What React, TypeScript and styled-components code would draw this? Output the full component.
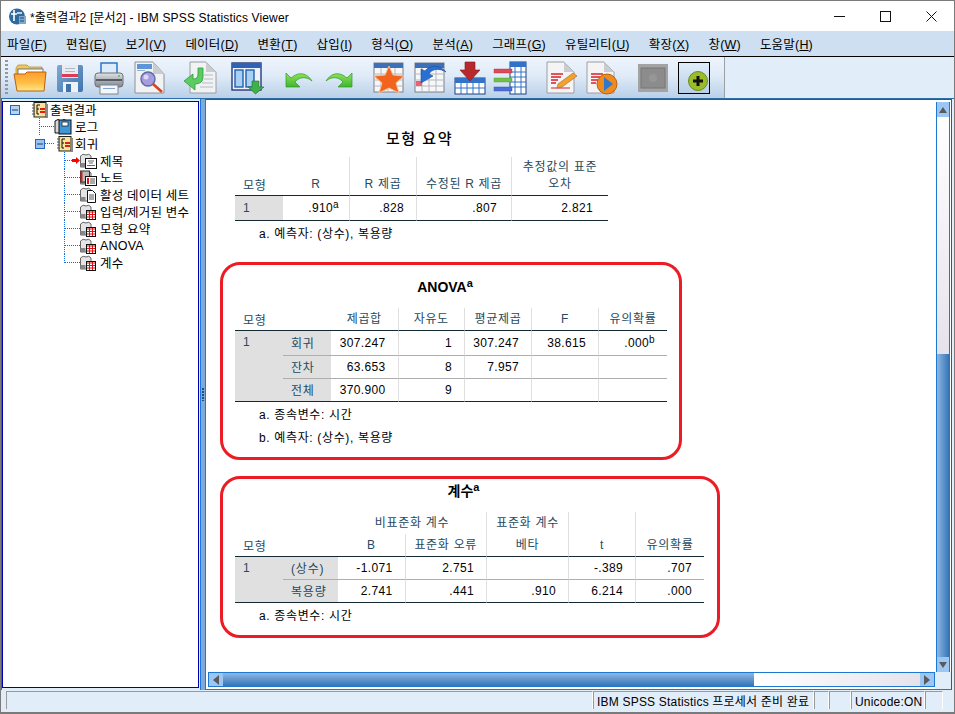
import React from "react";
import styled, { createGlobalStyle } from "styled-components";

const GlobalStyle = createGlobalStyle`
  html, body {
    margin: 0;
    padding: 0;
    overflow: hidden;
    background: #fff;
  }
  * {
    box-sizing: border-box;
  }
`;

const FONT = `"Liberation Sans", "Noto Sans CJK KR", sans-serif`;

/* ---------- toolbar drawings ---------- */

function FolderIcon() {
  return (
    <svg width="34" height="34" viewBox="0 0 34 34">
      <defs>
        <linearGradient id="fo" x1="0" y1="0" x2="0" y2="1">
          <stop offset="0" stopColor="#ff9c2a" />
          <stop offset="0.6" stopColor="#ffc04a" />
          <stop offset="1" stopColor="#ffe88a" />
        </linearGradient>
      </defs>
      <path d="M3 7 L5 4 H14 L16 6 H29 V14 H3 Z" fill="#f5c84c" stroke="#b58a20" strokeWidth=".7" />
      <rect x="5" y="8" width="25" height="6" fill="#fff" stroke="#3a5fa0" strokeWidth=".8" />
      <path d="M1 13 H12 L14 11 H33 L31 30 H4 Z" fill="url(#fo)" stroke="#b8620e" />
    </svg>
  );
}

function SaveIcon() {
  return (
    <svg width="34" height="34" viewBox="0 0 34 34">
      <defs>
        <linearGradient id="sv" x1="0" y1="0" x2="1" y2="1">
          <stop offset="0" stopColor="#7ea9d4" />
          <stop offset="1" stopColor="#3f74ab" />
        </linearGradient>
      </defs>
      <rect x="4" y="4" width="26" height="27" rx="2" fill="url(#sv)" />
      <rect x="9" y="4" width="16" height="13" fill="#e9ebf0" />
      <rect x="9" y="13" width="16" height="3" fill="#df3c54" />
      <rect x="12" y="7" width="10" height="1" fill="#aeb8c6" />
      <rect x="12" y="10" width="10" height="1" fill="#aeb8c6" />
      <rect x="10" y="21" width="15" height="10" fill="#eef1f5" />
      <rect x="13" y="23" width="5" height="8" fill="#3f74ab" />
    </svg>
  );
}

function PrintIcon() {
  return (
    <svg width="34" height="34" viewBox="0 0 34 34">
      <defs>
        <linearGradient id="pr" x1="0" y1="0" x2="0" y2="1">
          <stop offset="0" stopColor="#dfe2e6" />
          <stop offset="1" stopColor="#7f868e" />
        </linearGradient>
      </defs>
      <rect x="9" y="2" width="16" height="13" fill="#dcecfb" stroke="#1f6fc0" strokeWidth="1.4" />
      <rect x="3" y="12" width="28" height="14" rx="3" fill="url(#pr)" stroke="#6c7278" />
      <rect x="4" y="18" width="26" height="2" fill="#565c62" />
      <circle cx="27" cy="15" r="1" fill="#5ec24a" />
      <rect x="8" y="24" width="18" height="9" fill="#f4f6f9" stroke="#7f868e" />
      <rect x="11" y="27" width="12" height="1" fill="#7fa6d0" />
    </svg>
  );
}

function PreviewIcon() {
  return (
    <svg width="34" height="34" viewBox="0 0 34 34">
      <path d="M2 1 H20 L31 13 V32 H2 Z" fill="#f1f2f4" stroke="#8e9296" />
      <path d="M20 1 V13 H31 Z" fill="#c9cdd2" />
      <rect x="4" y="3" width="15" height="5" fill="#5d96d6" />
      <rect x="4" y="9" width="8" height="1" fill="#9db1c6" />
      <circle cx="15" cy="18" r="7" fill="#a79ce0" stroke="#5b6a9e" strokeWidth="1.4" />
      <circle cx="13" cy="16" r="2.5" fill="#dcd8f5" />
      <path d="M20 23 L29 31" stroke="#d8431f" strokeWidth="2.6" />
    </svg>
  );
}

function GotoIcon() {
  return (
    <svg width="34" height="34" viewBox="0 0 34 34">
      <path d="M7 1 H23 L33 11 V32 H7 Z" fill="#f1f2f4" stroke="#9a9ea2" />
      <path d="M23 1 V11 H33 Z" fill="#c9cdd2" />
      <path d="M21 14 H30 M21 18 H30 M19 22 H30 M17 26 H30" stroke="#b5bac0" />
      <path d="M15 7 H20 V16 Q20 23 12 23 V29 L1 20 L10 13 V18 Q15 18 15 13 Z" fill="#5ccc62" stroke="#2f9a3a" strokeWidth=".8" />
    </svg>
  );
}

function DesignateIcon() {
  return (
    <svg width="34" height="34" viewBox="0 0 34 34">
      <rect x="1" y="2" width="29" height="27" fill="#eef3fb" stroke="#273a78" strokeWidth="1.4" />
      <rect x="1" y="2" width="29" height="5" fill="#2f62b4" />
      <rect x="4" y="9" width="8" height="17" fill="#a9cff2" stroke="#1e5fb0" strokeWidth="1.4" />
      <rect x="15" y="9" width="8" height="17" fill="#a9cff2" stroke="#1e5fb0" strokeWidth="1.4" />
      <path d="M21 20 H28 V26 H33 L24.5 33 L17 26 H21 Z" fill="#3fb04a" stroke="#22702c" strokeWidth=".6" />
    </svg>
  );
}

function CurveArrow({ flip }: { flip?: boolean }) {
  const id = flip ? "ar2" : "ar1";
  return (
    <svg width="34" height="34" viewBox="0 0 34 34">
      <defs>
        <linearGradient id={id} x1="0" y1="0" x2="0" y2="1">
          <stop offset="0" stopColor="#8fe35a" />
          <stop offset="1" stopColor="#3fb52e" />
        </linearGradient>
      </defs>
      <g transform={flip ? "matrix(-1 0 0 1 34 0)" : undefined}>
        <path d="M4 12 V26 H18 L13 21 C17 16 24 15 30 20 C25 12 17 10 9 17 Z" fill={`url(#${id})`} stroke="#2f9a2a" strokeWidth=".7" />
      </g>
    </svg>
  );
}

function SheetGrid() {
  return (
    <>
      <rect x="2" y="2" width="29" height="29" fill="#f6f7f9" stroke="#7d8088" />
      <rect x="2" y="2" width="29" height="5" fill="#3f6fb6" />
      <path d="M9 7 V31 M16 7 V31 M23 7 V31 M2 13 H31 M2 19 H31 M2 25 H31" stroke="#b4b7bd" />
    </>
  );
}

function StarTableIcon() {
  return (
    <svg width="34" height="34" viewBox="0 0 34 34">
      <SheetGrid />
      <path d="M17 5 L21 14 L32 15 L24 22 L27 32 L17 27 L7 32 L10 22 L2 15 L13 14 Z" fill="#f2641e" stroke="#f3c19b" strokeWidth="1" />
    </svg>
  );
}

function TableBackIcon() {
  return (
    <svg width="34" height="34" viewBox="0 0 34 34">
      <SheetGrid />
      <rect x="3" y="20" width="6" height="5" fill="#ee5f74" />
      <path d="M33 11 C25 6 18 9 16 13 L20 15 L8 22 L8 8 L12 10 C16 4 27 3 33 11 Z" fill="#2a6fd2" stroke="#1a4f9e" strokeWidth=".6" />
    </svg>
  );
}

function InsertIcon() {
  return (
    <svg width="34" height="34" viewBox="0 0 34 34">
      <rect x="2" y="17" width="30" height="16" fill="#fff" stroke="#1f3f80" />
      <rect x="2" y="17" width="30" height="5" fill="#3272c8" />
      <path d="M2 27 H32 M8 22 V33 M14 22 V33 M20 22 V33 M26 22 V33" stroke="#2f72c8" />
      <path d="M12 1 H22 V9 H27 L17 20 L7 9 H12 Z" fill="#b8282c" stroke="#7a1c1e" strokeWidth=".6" />
    </svg>
  );
}

function BarsIcon() {
  return (
    <svg width="34" height="34" viewBox="0 0 34 34">
      <rect x="17" y="1" width="16" height="32" fill="#fff" stroke="#1f3f80" />
      <rect x="17" y="1" width="16" height="5" fill="#2f72c8" />
      <path d="M17 11 H33 M17 16 H33 M17 21 H33 M17 26 H33 M22 6 V33 M28 6 V33" stroke="#2f72c8" />
      <rect x="1" y="8" width="18" height="4" fill="#dd4a58" stroke="#b03040" strokeWidth=".4" />
      <rect x="1" y="17" width="18" height="4" fill="#72c04a" stroke="#4c9a30" strokeWidth=".4" />
      <rect x="1" y="26" width="18" height="4" fill="#4a6fd8" stroke="#2c4ca8" strokeWidth=".4" />
    </svg>
  );
}

function DocLines() {
  return (
    <>
      <path d="M3 1 H20 L30 11 V32 H3 Z" fill="#f4f4f5" stroke="#9a9ea2" />
      <path d="M20 1 V11 H30 Z" fill="#c9cdd2" />
      <path d="M7 13 H19 M7 16 H17 M7 19 H14 M7 22 H12" stroke="#d6202c" strokeWidth="1.4" />
    </>
  );
}

function NoteIcon() {
  return (
    <svg width="34" height="34" viewBox="0 0 34 34">
      <DocLines />
      <path d="M7 27 H26" stroke="#d6202c" />
      <path d="M14 23 L29 12 L33 15 L18 26 L13 27 Z" fill="#f2a030" stroke="#a86412" strokeWidth=".6" />
    </svg>
  );
}

function PlayDocIcon() {
  return (
    <svg width="34" height="34" viewBox="0 0 34 34">
      <DocLines />
      <circle cx="23" cy="23" r="10" fill="#ee8a1e" stroke="#b8620e" />
      <path d="M20 16 L29 23 L20 30 Z" fill="#2f79c8" />
    </svg>
  );
}

function DisabledIcon() {
  return (
    <svg width="30" height="28" viewBox="0 0 30 28">
      <rect width="30" height="28" fill="#a3a3a3" />
      <rect x="3" y="4" width="24" height="20" fill="#8c8c8c" stroke="#777" />
      <circle cx="15" cy="14" r="4" fill="#969696" />
    </svg>
  );
}

function PlusIcon() {
  return (
    <svg width="32" height="32" viewBox="0 0 32 32">
      <defs>
        <linearGradient id="pl" x1="0" y1="0" x2="0" y2="1">
          <stop offset="0" stopColor="#e2edfa" />
          <stop offset="1" stopColor="#b5cee8" />
        </linearGradient>
      </defs>
      <rect x=".5" y=".5" width="31" height="31" fill="url(#pl)" stroke="#000" />
      <circle cx="20" cy="19" r="9.5" fill="#9bbc2a" stroke="#6d8a1a" />
      <path d="M20 14 V24 M15 19 H25" stroke="#111" strokeWidth="3" />
    </svg>
  );
}

const TOOLS: { key: string; gap: number; icon: React.ReactNode }[] = [
  { key: "open", gap: 0, icon: <FolderIcon /> },
  { key: "save", gap: 0, icon: <SaveIcon /> },
  { key: "print", gap: -1, icon: <PrintIcon /> },
  { key: "preview", gap: 1, icon: <PreviewIcon /> },
  { key: "goto", gap: 10, icon: <GotoIcon /> },
  { key: "designate", gap: 8, icon: <DesignateIcon /> },
  { key: "undo", gap: 11, icon: <CurveArrow /> },
  { key: "redo", gap: 0, icon: <CurveArrow flip /> },
  { key: "star", gap: 10, icon: <StarTableIcon /> },
  { key: "back", gap: 1, icon: <TableBackIcon /> },
  { key: "insert", gap: 0, icon: <InsertIcon /> },
  { key: "bars", gap: 0, icon: <BarsIcon /> },
  { key: "note", gap: 11, icon: <NoteIcon /> },
  { key: "play", gap: 0, icon: <PlayDocIcon /> },
  { key: "disabled", gap: 12, icon: <DisabledIcon /> },
  { key: "plus", gap: 1, icon: <PlusIcon /> },
];

const MENUS = [
  ["파일", "F"],
  ["편집", "E"],
  ["보기", "V"],
  ["데이터", "D"],
  ["변환", "T"],
  ["삽입", "I"],
  ["형식", "O"],
  ["분석", "A"],
  ["그래프", "G"],
  ["유틸리티", "U"],
  ["확장", "X"],
  ["창", "W"],
  ["도움말", "H"],
];

/* ---------- tree drawings ---------- */

function OutputBook() {
  return (
    <svg width="16" height="16" viewBox="0 0 16 16">
      <rect x="2" y="0.5" width="12" height="14.5" fill="#f8e49a" stroke="#222" />
      <rect x="14" y="2" width="2" height="14" fill="#888" />
      <path d="M0 3 H3 M0 6 H3 M0 9 H3 M0 12 H3" stroke="#555" />
      <path d="M5 3 V12 M5 3 H8 M5 7 H7 M5 12 H7" stroke="#111" />
      <rect x="8" y="6" width="5" height="2" fill="#e41a1a" />
      <rect x="8" y="9" width="5" height="2" fill="#e41a1a" />
    </svg>
  );
}

function LogBook() {
  return (
    <svg width="18" height="17" viewBox="0 0 18 17">
      <path d="M1 3 Q4 0 7 3 V15 H1 Z" fill="#d8d8d8" stroke="#111" />
      <path d="M7 3 Q10 0 13 3" fill="none" stroke="#111" />
      <rect x="5" y="2" width="12" height="14" fill="#3f97d8" stroke="#111" />
      <rect x="8" y="4" width="6" height="4" fill="#fff" stroke="#111" strokeWidth=".7" />
    </svg>
  );
}

function PageBook({ kind }: { kind: "title" | "note" | "doc" | "table" }) {
  return (
    <svg width="17" height="16" viewBox="0 0 17 16">
      <path d="M0.5 3 Q3 0 6 2 Q9 0 11 3 V14 H0.5 Z" fill="#e4e4e4" stroke="#666" />
      <rect x="0.5" y="10" width="5" height="4" fill="#888" />
      {kind === "title" && (
        <>
          <rect x="5.5" y="5.5" width="11" height="10" fill="#fff" stroke="#111" />
          <path d="M8 8 H14 M9 10 H13 M7 12.5 H15" stroke="#666" />
        </>
      )}
      {kind === "note" && (
        <>
          <rect x="0.5" y="1" width="9" height="11" fill="#bbb" stroke="#333" />
          <rect x="0.5" y="1" width="2" height="11" fill="#c22" />
          <rect x="5.5" y="6.5" width="11" height="9" fill="#fff" stroke="#111" />
          <rect x="7" y="8" width="2" height="6" fill="#d11" />
          <path d="M10 9 H15 M10 11 H15 M10 13 H15" stroke="#555" />
        </>
      )}
      {kind === "doc" && (
        <>
          <path d="M7.5 3.5 H12.5 L15.5 6.5 V15.5 H7.5 Z" fill="#fff" stroke="#111" />
          <path d="M9 8 H14 M9 10 H14 M9 12 H14" stroke="#555" />
        </>
      )}
      {kind === "table" && (
        <>
          <rect x="6.5" y="6.5" width="9" height="9" fill="#fff" stroke="#111" />
          <path d="M7 8 H15 M9.5 7 V15 M12.5 7 V15 M7 10.5 H15 M7 13 H15" stroke="#d11" />
        </>
      )}
    </svg>
  );
}

function Collapse({ lit }: { lit?: boolean }) {
  return (
    <svg width="10" height="10" viewBox="0 0 10 10">
      <rect x=".5" y=".5" width="9" height="9" fill={lit ? "#9cc4f2" : "#b9d3f2"} stroke="#2467b8" />
      <path d="M2 5 H8" stroke="#1b3f78" />
    </svg>
  );
}

/* ---------- layout ---------- */

const Window = styled.div`
  width: 955px;
  height: 714px;
  display: flex;
  flex-direction: column;
  font-family: ${FONT};
  color: #000;
  border-top: 1px solid #7a7a7a;
  border-left: 1px solid #7a7a7a;
  border-right: 1px solid #7a7a7a;
  background: #e2edfa;
  overflow: hidden;
`;

const TitleBar = styled.div`
  height: 30px;
  flex: none;
  background: #fff;
  display: flex;
  align-items: center;
  padding-left: 8px;
  font-size: 12px;
  letter-spacing: 0.15px;
`;

const TitleText = styled.span`
  margin-left: 4px;
  flex: 1;
`;

const WinButton = styled.div`
  width: 46px;
  height: 30px;
  display: flex;
  align-items: center;
  justify-content: center;
`;

const MenuBar = styled.div`
  height: 26px;
  flex: none;
  display: flex;
  align-items: center;
  gap: 19px;
  padding: 0 0 0 6px;
  background: #cddff0;
  border-bottom: 1px solid #000;
  font-size: 12.5px;
  letter-spacing: 0.2px;
`;

const MenuItem = styled.div`
  white-space: nowrap;
`;

const Mnemonic = styled.span`
  text-decoration: underline;
`;

const ToolRow = styled.div`
  height: 42px;
  flex: none;
  display: flex;
  background: #e2edfa;
  border-bottom: 1px solid #2c6ea8;
`;

const ToolStrip = styled.div`
  width: 724px;
  display: flex;
  align-items: center;
  padding-left: 9px;
  position: relative;
  background: linear-gradient(#eef4fc, #e0ebf8 45%, #b9d0e8);
  border-right: 1px solid #9aa0a8;
`;

const Grip = styled.div`
  position: absolute;
  left: 4px;
  top: 3px;
  bottom: 3px;
  width: 3px;
  background: repeating-linear-gradient(#8f99a6 0 2px, transparent 2px 4px);
`;

const ToolButton = styled.div<{ $gap: number }>`
  width: 40px;
  height: 36px;
  flex: none;
  margin-left: ${(p) => p.$gap}px;
  display: flex;
  align-items: center;
  justify-content: center;
`;

const Body = styled.div`
  flex: 1;
  min-height: 0;
  display: flex;
  background: #e2edfa;
`;

const LeftSide = styled.div`
  width: 200px;
  flex: none;
  padding: 2px 1px 2px 0;
  background: #e2edfa;
  border-left: 1px solid #2b6cb0;
  border-right: 1px solid #1e78d0;
`;

const TreePanel = styled.div`
  height: 100%;
  background: #fff;
  border: 1px solid #0000b0;
  font-size: 12.5px;
  letter-spacing: 0.2px;
`;

const TreeRow = styled.div<{ $indent: number }>`
  height: 17px;
  display: flex;
  align-items: center;
  padding-left: ${(p) => p.$indent}px;
  white-space: nowrap;
  &:first-child {
    margin-top: -1px;
  }
`;

const Elbow = styled.div<{ $w: number; $last?: boolean }>`
  width: ${(p) => p.$w}px;
  height: 17px;
  flex: none;
  position: relative;
  &::before {
    content: "";
    position: absolute;
    left: 0;
    top: 0;
    bottom: ${(p) => (p.$last ? 8 : 0)}px;
    border-left: 1px dotted #1469e0;
  }
  &::after {
    content: "";
    position: absolute;
    left: 0;
    right: 0;
    top: 8px;
    border-top: 1px dotted #1469e0;
  }
`;

const SlotIcon = styled.div<{ $w: number }>`
  width: ${(p) => p.$w}px;
  flex: none;
  display: flex;
  align-items: center;
`;

const ToggleSlot = styled.div<{ $w: number }>`
  width: ${(p) => p.$w}px;
  flex: none;
  display: flex;
  align-items: center;
  position: relative;
`;

const ToggleLine = styled.div<{ $w: number }>`
  width: ${(p) => p.$w}px;
  border-top: 1px dotted #1469e0;
`;

const RedArrow = styled.svg`
  position: absolute;
  right: 0;
  top: 5px;
`;

const Splitter = styled.div`
  width: 4px;
  flex: none;
  background: #7ea9d8;
  display: flex;
  align-items: center;
  justify-content: center;
`;

const SplitGrip = styled.div`
  width: 2px;
  height: 13px;
  background: repeating-linear-gradient(#1b4f8a 0 2px, transparent 2px 3px);
`;

const Pane = styled.div`
  width: 747px;
  flex: none;
  display: flex;
  flex-direction: column;
  border-left: 1px solid #1e78d0;
  border-top: 1px solid #1a5f9e;
  border-bottom: 1px solid #1e78d0;
  border-right: 1px solid #1a5f9e;
  background: #e2edfa;
`;

const PaneMain = styled.div`
  flex: 1;
  min-height: 0;
  display: flex;
`;

const Viewer = styled.div`
  flex: 1;
  background: #fff;
  padding: 27px 0 0 14px;
  overflow: hidden;
  color: #010205;
`;

const VBar = styled.div`
  width: 16px;
  flex: none;
  padding: 2px 1px 0 1px;
  display: flex;
  flex-direction: column;
  background: #fff;
`;

const HRow = styled.div`
  height: 17px;
  flex: none;
  display: flex;
`;

const HBarWrap = styled.div`
  flex: 1;
  background: #fff;
  padding-left: 2px;
`;

const Corner = styled.div`
  width: 16px;
  flex: none;
  background: #e2edfa;
`;

const HBar = styled.div`
  height: 15px;
  display: flex;
  border: 1px solid #1e78d0;
`;

const ScrollBtn = styled.div<{ $v?: boolean }>`
  flex: none;
  width: ${(p) => (p.$v ? "100%" : "14px")};
  height: ${(p) => (p.$v ? "15px" : "100%")};
  background: #9cc7f5;
  display: flex;
  align-items: center;
  justify-content: center;
  ${(p) => (p.$v ? "border-left: 1px solid #1e78d0; border-right: 1px solid #1e78d0;" : "")}
`;

const Track = styled.div<{ $v?: boolean; $size: number }>`
  flex: none;
  ${(p) => (p.$v ? `height: ${p.$size}px;` : `width: ${p.$size}px;`)}
  background: linear-gradient(${(p) => (p.$v ? "180deg" : "90deg")}, #fff, #e6e2ec);
  ${(p) => (p.$v ? "border-left: 1px solid #1e78d0; border-right: 1px solid #1e78d0;" : "")}
`;

const Thumb = styled.div<{ $v?: boolean }>`
  flex: 1;
  background: linear-gradient(${(p) => (p.$v ? "90deg" : "180deg")}, #8db7e2, #3574b8);
  ${(p) => (p.$v ? "border-left: 1px solid #1e78d0; border-right: 1px solid #1e78d0;" : "")}
`;

const StatusBar = styled.div`
  height: 24px;
  flex: none;
  display: flex;
  padding: 1px 12px 3px 5px;
  background: #e2edfa;
  border-bottom: 2px solid #7a7a7a;
  font-size: 12px;
  letter-spacing: 0.2px;
`;

const StatusCell = styled.div<{ $w: number }>`
  width: ${(p) => p.$w}px;
  flex: none;
  padding-left: 3px;
  line-height: 20px;
  white-space: nowrap;
  border-top: 1px solid #9a9a9a;
  border-left: 1px solid #9a9a9a;
  border-right: 1px solid #fff;
`;

/* ---------- output tables ---------- */

const Block = styled.div`
  margin-left: 15px;
`;

const Marked = styled.div<{ $w: number; $h: number; $top: number; $pad: number }>`
  width: ${(p) => p.$w}px;
  height: ${(p) => p.$h}px;
  margin-top: ${(p) => p.$top}px;
  padding: ${(p) => p.$pad}px 0 0 12px;
  border: 3px solid #ed1c24;
  border-radius: 20px;
`;

const Caption = styled.div<{ $w: number; $h: number; $mb: number; $pr: number; $ko?: boolean }>`
  width: ${(p) => p.$w}px;
  height: ${(p) => p.$h}px;
  margin-bottom: ${(p) => p.$mb}px;
  padding-right: ${(p) => p.$pr}px;
  line-height: ${(p) => p.$h}px;
  text-align: center;
  font-size: ${(p) => (p.$ko ? "15px" : "14px")};
  font-weight: ${(p) => (p.$ko ? 500 : 700)};
  letter-spacing: ${(p) => (p.$ko ? "1.5px" : "0")};
  color: #000;
  sup {
    font-size: 11px;
    line-height: 0;
    vertical-align: 5px;
    font-weight: 700;
  }
`;

const Table = styled.table<{ $w: number }>`
  width: ${(p) => p.$w}px;
  table-layout: fixed;
  border-collapse: separate;
  border-spacing: 0;
  font-size: 12px;
  letter-spacing: 0.35px;
  sup {
    font-size: 10px;
    line-height: 0;
    vertical-align: 4px;
  }
`;

const Th = styled.th<{ $line?: boolean; $rule?: boolean; $left?: boolean; $h: number }>`
  height: ${(p) => p.$h}px;
  padding: 0 2px ${(p) => (p.$left ? 0 : 2)}px ${(p) => (p.$left ? 8 : 2)}px;
  font-weight: 400;
  color: #264a60;
  vertical-align: bottom;
  text-align: ${(p) => (p.$left ? "left" : "center")};
  line-height: 17px;
  letter-spacing: 0.7px;
  border-right: ${(p) => (p.$line ? "1px solid #dfdfdf" : "none")};
  border-bottom: ${(p) => (p.$rule ? "1px solid #152935" : "none")};
`;

const Td = styled.td<{
  $h: number;
  $line?: boolean;
  $rule?: "dark" | "soft";
  $shade?: boolean;
  $stub?: boolean;
  $span?: boolean;
  $pr?: number;
}>`
  height: ${(p) => p.$h}px;
  padding: ${(p) =>
    p.$span ? "4px 0 0 8px" : p.$stub ? "0 0 1px 8px" : `0 ${p.$pr ?? 12}px 1px 0`};
  text-align: ${(p) => (p.$stub ? "left" : "right")};
  color: ${(p) => (p.$stub ? "#264a60" : "#010205")};
  background: ${(p) => (p.$shade ? "#e0e0e0" : "transparent")};
  letter-spacing: ${(p) => (p.$stub ? "0.8px" : "0.35px")};
  vertical-align: ${(p) => (p.$span ? "top" : "middle")};
  border-right: ${(p) => (p.$line ? "1px solid #dfdfdf" : "none")};
  border-bottom: ${(p) =>
    p.$rule === "dark" ? "1px solid #152935" : p.$rule === "soft" ? "1px solid #aeaeae" : "none"};
`;

const Note = styled.div`
  height: 23px;
  line-height: 27px;
  padding-left: 24px;
  font-size: 12px;
  letter-spacing: 0.65px;
  color: #010205;
`;

function Cols({ widths }: { widths: number[] }) {
  return (
    <colgroup>
      {widths.map((w, i) => (
        <col key={i} style={{ width: w }} />
      ))}
    </colgroup>
  );
}

function SummaryTable() {
  return (
    <Table $w={373}>
      <Cols widths={[48, 67, 67, 95, 96]} />
      <thead>
        <tr>
          <Th $h={39} $left $rule>모형</Th>
          <Th $h={39} $line $rule>R</Th>
          <Th $h={39} $line $rule>R 제곱</Th>
          <Th $h={39} $line $rule>수정된 R 제곱</Th>
          <Th $h={39} $rule>추정값의 표준<br />오차</Th>
        </tr>
      </thead>
      <tbody>
        <tr>
          <Td $h={25} $stub $shade $rule="dark">1</Td>
          <Td $h={25} $line $rule="dark" $pr={10}>.910<sup>a</sup></Td>
          <Td $h={25} $line $rule="dark">.828</Td>
          <Td $h={25} $line $rule="dark" $pr={14}>.807</Td>
          <Td $h={25} $rule="dark" $pr={15}>2.821</Td>
        </tr>
      </tbody>
    </Table>
  );
}

function AnovaTable() {
  return (
    <Table $w={432}>
      <Cols widths={[48, 48, 67.5, 66.5, 67, 67, 68]} />
      <thead>
        <tr>
          <Th $h={23} $left $rule colSpan={2}>모형</Th>
          <Th $h={23} $line $rule>제곱합</Th>
          <Th $h={23} $line $rule>자유도</Th>
          <Th $h={23} $line $rule>평균제곱</Th>
          <Th $h={23} $line $rule>F</Th>
          <Th $h={23} $rule>유의확률</Th>
        </tr>
      </thead>
      <tbody>
        <tr>
          <Td $h={25} $stub $span $shade $rule="dark" rowSpan={3}>1</Td>
          <Td $h={25} $stub $shade $rule="soft">회귀</Td>
          <Td $h={25} $line $rule="soft">307.247</Td>
          <Td $h={25} $line $rule="soft">1</Td>
          <Td $h={25} $line $rule="soft">307.247</Td>
          <Td $h={25} $line $rule="soft">38.615</Td>
          <Td $h={25} $rule="soft">.000<sup>b</sup></Td>
        </tr>
        <tr>
          <Td $h={23} $stub $shade $rule="soft">잔차</Td>
          <Td $h={23} $line $rule="soft">63.653</Td>
          <Td $h={23} $line $rule="soft">8</Td>
          <Td $h={23} $line $rule="soft">7.957</Td>
          <Td $h={23} $line $rule="soft" />
          <Td $h={23} $rule="soft" />
        </tr>
        <tr>
          <Td $h={23} $stub $shade $rule="dark">전체</Td>
          <Td $h={23} $line $rule="dark">370.900</Td>
          <Td $h={23} $line $rule="dark">9</Td>
          <Td $h={23} $line $rule="dark" />
          <Td $h={23} $line $rule="dark" />
          <Td $h={23} $rule="dark" />
        </tr>
      </tbody>
    </Table>
  );
}

function CoefTable() {
  return (
    <Table $w={469}>
      <Cols widths={[48, 55, 67.5, 81.5, 82, 67, 68]} />
      <thead>
        <tr>
          <Th $h={22} colSpan={2} />
          <Th $h={22} $line colSpan={2}>비표준화 계수</Th>
          <Th $h={22} $line>표준화 계수</Th>
          <Th $h={22} $line />
          <Th $h={22} />
        </tr>
        <tr>
          <Th $h={23} $left $rule colSpan={2}>모형</Th>
          <Th $h={23} $line $rule>B</Th>
          <Th $h={23} $line $rule>표준화 오류</Th>
          <Th $h={23} $line $rule>베타</Th>
          <Th $h={23} $line $rule>t</Th>
          <Th $h={23} $rule>유의확률</Th>
        </tr>
      </thead>
      <tbody>
        <tr>
          <Td $h={23} $stub $span $shade $rule="dark" rowSpan={2}>1</Td>
          <Td $h={23} $stub $shade $rule="soft">(상수)</Td>
          <Td $h={23} $line $rule="soft">-1.071</Td>
          <Td $h={23} $line $rule="soft">2.751</Td>
          <Td $h={23} $line $rule="soft" />
          <Td $h={23} $line $rule="soft">-.389</Td>
          <Td $h={23} $rule="soft">.707</Td>
        </tr>
        <tr>
          <Td $h={23} $stub $shade $rule="dark">복용량</Td>
          <Td $h={23} $line $rule="dark">2.741</Td>
          <Td $h={23} $line $rule="dark">.441</Td>
          <Td $h={23} $line $rule="dark">.910</Td>
          <Td $h={23} $line $rule="dark">6.214</Td>
          <Td $h={23} $rule="dark">.000</Td>
        </tr>
      </tbody>
    </Table>
  );
}

function Tri({ dir }: { dir: "up" | "down" | "left" | "right" }) {
  const d = {
    up: "M1 8 L5 2 L9 8 Z",
    down: "M1 2 L9 2 L5 8 Z",
    left: "M8 0 V10 L2 5 Z",
    right: "M2 0 V10 L8 5 Z",
  }[dir];
  return (
    <svg width="10" height="10" viewBox="0 0 10 10">
      <path d={d} fill="#5a5a5a" />
    </svg>
  );
}

export default function App() {
  return (
    <>
      <GlobalStyle />
      <Window>
        <TitleBar>
          <svg width="17" height="17" viewBox="0 0 17 17">
            <circle cx="8" cy="8.5" r="8" fill="#2f6a9c" />
            <rect x="10" y="8" width="7" height="8" fill="#7fa8cc" />
            <path d="M5 2 V13 M2 6 H8" stroke="#fff" strokeWidth="1.6" />
            <path d="M8 5 H13" stroke="#fff" strokeWidth="1.4" />
            <path d="M11 10 H15 M11 13 H15" stroke="#1d4b75" />
          </svg>
          <TitleText>*출력결과2 [문서2] - IBM SPSS Statistics Viewer</TitleText>
          <WinButton>
            <svg width="11" height="11" viewBox="0 0 11 11">
              <path d="M0 5.5 H11" stroke="#111" />
            </svg>
          </WinButton>
          <WinButton>
            <svg width="11" height="11" viewBox="0 0 11 11">
              <rect x=".5" y=".5" width="10" height="10" fill="none" stroke="#111" />
            </svg>
          </WinButton>
          <WinButton>
            <svg width="11" height="11" viewBox="0 0 11 11">
              <path d="M.5 .5 L10.5 10.5 M10.5 .5 L.5 10.5" stroke="#111" />
            </svg>
          </WinButton>
        </TitleBar>

        <MenuBar>
          {MENUS.map(([name, key]) => (
            <MenuItem key={key}>
              {name}(<Mnemonic>{key}</Mnemonic>)
            </MenuItem>
          ))}
        </MenuBar>

        <ToolRow>
          <ToolStrip>
            <Grip />
            {TOOLS.map((t) => (
              <ToolButton key={t.key} $gap={t.gap}>
                {t.icon}
              </ToolButton>
            ))}
          </ToolStrip>
        </ToolRow>

        <Body>
          <LeftSide>
            <TreePanel>
              <TreeRow $indent={7}>
                <ToggleSlot $w={22}>
                  <Collapse />
                </ToggleSlot>
                <SlotIcon $w={18}>
                  <OutputBook />
                </SlotIcon>
                출력결과
              </TreeRow>
              <TreeRow $indent={36}>
                <Elbow $w={15} />
                <SlotIcon $w={21}>
                  <LogBook />
                </SlotIcon>
                로그
              </TreeRow>
              <TreeRow $indent={32}>
                <ToggleSlot $w={22}>
                  <Collapse lit />
                  <ToggleLine $w={9} />
                </ToggleSlot>
                <SlotIcon $w={18}>
                  <OutputBook />
                </SlotIcon>
                회귀
              </TreeRow>
              <TreeRow $indent={61}>
                <ToggleSlot $w={16}>
                  <Elbow $w={8} />
                  <RedArrow width="8" height="7" viewBox="0 0 8 7">
                    <path d="M0 2 H4 V0 L8 3.5 L4 7 V5 H0 Z" fill="#f00" />
                  </RedArrow>
                </ToggleSlot>
                <SlotIcon $w={20}>
                  <PageBook kind="title" />
                </SlotIcon>
                제목
              </TreeRow>
              <TreeRow $indent={61}>
                <Elbow $w={16} />
                <SlotIcon $w={20}>
                  <PageBook kind="note" />
                </SlotIcon>
                노트
              </TreeRow>
              <TreeRow $indent={61}>
                <Elbow $w={16} />
                <SlotIcon $w={20}>
                  <PageBook kind="doc" />
                </SlotIcon>
                활성 데이터 세트
              </TreeRow>
              <TreeRow $indent={61}>
                <Elbow $w={16} />
                <SlotIcon $w={20}>
                  <PageBook kind="table" />
                </SlotIcon>
                입력/제거된 변수
              </TreeRow>
              <TreeRow $indent={61}>
                <Elbow $w={16} />
                <SlotIcon $w={20}>
                  <PageBook kind="table" />
                </SlotIcon>
                모형 요약
              </TreeRow>
              <TreeRow $indent={61}>
                <Elbow $w={16} />
                <SlotIcon $w={20}>
                  <PageBook kind="table" />
                </SlotIcon>
                ANOVA
              </TreeRow>
              <TreeRow $indent={61}>
                <Elbow $w={16} $last />
                <SlotIcon $w={20}>
                  <PageBook kind="table" />
                </SlotIcon>
                계수
              </TreeRow>
            </TreePanel>
          </LeftSide>

          <Splitter>
            <SplitGrip />
          </Splitter>

          <Pane>
            <PaneMain>
              <Viewer>
                <Block>
                  <Caption $w={373} $h={24} $mb={6} $pr={4} $ko>
                    모형 요약
                  </Caption>
                  <SummaryTable />
                  <Note>a. 예측자: (상수), 복용량</Note>
                </Block>

                <Marked $w={462} $h={198} $top={18} $pad={10}>
                  <Caption $w={432} $h={24} $mb={9} $pr={12}>
                    ANOVA<sup>a</sup>
                  </Caption>
                  <AnovaTable />
                  <Note>a. 종속변수: 시간</Note>
                  <Note>b. 예측자: (상수), 복용량</Note>
                </Marked>

                <Marked $w={500} $h={162} $top={16} $pad={1}>
                  <Caption $w={469} $h={22} $mb={10} $pr={12}>
                    계수<sup>a</sup>
                  </Caption>
                  <CoefTable />
                  <Note>a. 종속변수: 시간</Note>
                </Marked>
              </Viewer>
              <VBar>
                <ScrollBtn $v>
                  <Tri dir="up" />
                </ScrollBtn>
                <Track $v $size={237} />
                <Thumb $v />
                <ScrollBtn $v>
                  <Tri dir="down" />
                </ScrollBtn>
              </VBar>
            </PaneMain>
            <HRow>
              <HBarWrap>
                <HBar>
                  <ScrollBtn>
                    <Tri dir="left" />
                  </ScrollBtn>
                  <Thumb />
                  <Track $size={166} />
                  <ScrollBtn>
                    <Tri dir="right" />
                  </ScrollBtn>
                </HBar>
              </HBarWrap>
              <Corner />
            </HRow>
          </Pane>
        </Body>

        <StatusBar>
          <StatusCell $w={587} />
          <StatusCell $w={221}>IBM SPSS Statistics 프로세서 준비 완료</StatusCell>
          <StatusCell $w={15} />
          <StatusCell $w={22} />
          <StatusCell $w={74}>Unicode:ON</StatusCell>
          <StatusCell $w={18} />
        </StatusBar>
      </Window>
    </>
  );
}
